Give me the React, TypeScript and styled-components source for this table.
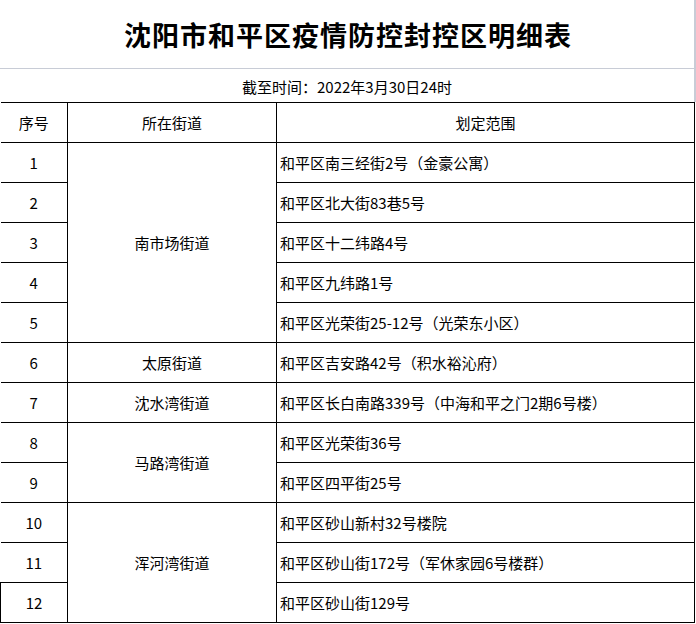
import React from "react"
import styled, { createGlobalStyle } from "styled-components"

const GlobalStyle = createGlobalStyle`
  html, body {
    margin: 0;
    padding: 0;
    background: #fff;
  }
  body {
    font-family: "Noto Sans CJK SC", "Liberation Sans", sans-serif;
    color: #000;
  }
`

const Sheet = styled.div`
  width: 696px;
  height: 624px;
  overflow: hidden;
  background: #fff;
`

const TitleRow = styled.div`
  height: 69px;
  display: flex;
  align-items: center;
  justify-content: center;
  border-bottom: 1px solid #c8ccd6;
  border-right: 2px solid #c8ccd6;
  box-sizing: border-box;
  width: 696px;
  h1 {
    margin: 0;
    font-size: 27px;
    font-weight: 700;
    letter-spacing: 1px;
    padding-left: 2px;
  }
`

const DateRow = styled.div`
  height: 33px;
  display: flex;
  align-items: center;
  justify-content: center;
  border-right: 2px solid #c8ccd6;
  box-sizing: border-box;
  width: 696px;
  font-size: 15px;
  padding-top: 1px;
`

const Table = styled.table`
  border-collapse: collapse;
  table-layout: fixed;
  width: 695px;
  font-size: 15px;
`

const Cell = styled.td<{ $align?: "left" | "center"; $edge?: boolean }>`
  border: 1px solid #000;
  border-left: ${p => (p.$edge ? "1px solid #000" : "none")};
  height: 39px;
  padding: 0 ${p => (p.$align === "left" ? "0 0 3px" : "0")};
  text-align: ${p => p.$align || "center"};
  vertical-align: middle;
  white-space: nowrap;
  line-height: 1;
`

const HeadCell = styled(Cell).attrs({ as: "th" })`
  font-weight: 400;
`

interface Row {
  no: number
  street?: string
  span?: number
  area: string
}

const rows: Row[] = [
  { no: 1, street: "南市场街道", span: 5, area: "和平区南三经街2号（金豪公寓）" },
  { no: 2, area: "和平区北大街83巷5号" },
  { no: 3, area: "和平区十二纬路4号" },
  { no: 4, area: "和平区九纬路1号" },
  { no: 5, area: "和平区光荣街25-12号（光荣东小区）" },
  { no: 6, street: "太原街道", span: 1, area: "和平区吉安路42号（积水裕沁府）" },
  { no: 7, street: "沈水湾街道", span: 1, area: "和平区长白南路339号（中海和平之门2期6号楼）" },
  { no: 8, street: "马路湾街道", span: 2, area: "和平区光荣街36号" },
  { no: 9, area: "和平区四平街25号" },
  { no: 10, street: "浑河湾街道", span: 3, area: "和平区砂山新村32号楼院" },
  { no: 11, area: "和平区砂山街172号（军休家园6号楼群）" },
  { no: 12, area: "和平区砂山街129号" },
]

export default function App() {
  return (
    <Sheet>
      <GlobalStyle />
      <TitleRow>
        <h1>沈阳市和平区疫情防控封控区明细表</h1>
      </TitleRow>
      <DateRow>截至时间：2022年3月30日24时</DateRow>
      <Table>
        <colgroup>
          <col style={{ width: 67 }} />
          <col style={{ width: 209 }} />
          <col />
        </colgroup>
        <thead>
          <tr>
            <HeadCell>序号</HeadCell>
            <HeadCell>所在街道</HeadCell>
            <HeadCell>划定范围</HeadCell>
          </tr>
        </thead>
        <tbody>
          {rows.map(r => (
            <tr key={r.no}>
              <Cell $edge={r.no === 12}>{r.no}</Cell>
              {r.street && <Cell rowSpan={r.span}>{r.street}</Cell>}
              <Cell $align="left">{r.area}</Cell>
            </tr>
          ))}
        </tbody>
      </Table>
    </Sheet>
  )
}
